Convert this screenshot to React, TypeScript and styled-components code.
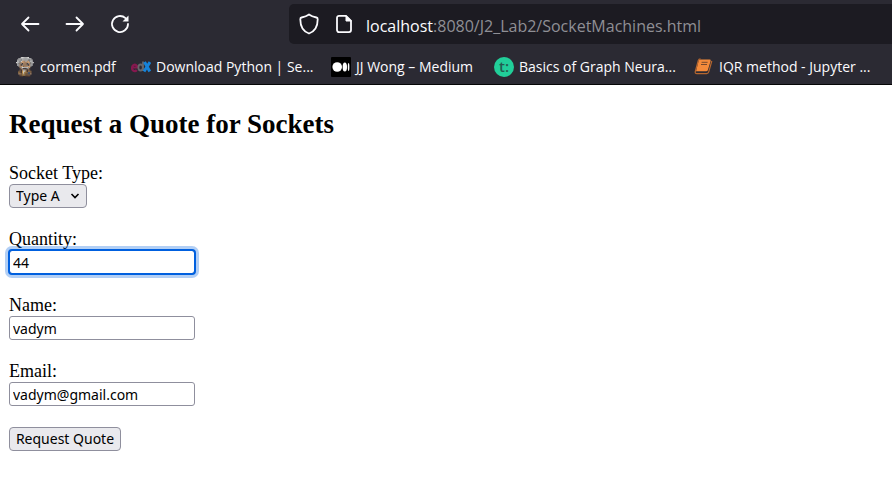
import React from "react";
import styled, { createGlobalStyle } from "styled-components";

const GlobalStyle = createGlobalStyle`
  * { box-sizing: border-box; }
  body { margin: 0; background: #fff; color: #000; }
`;

const uiFont = `"Open Sans", "Noto Sans", sans-serif`;
const controlFont = `"Noto Sans", "Open Sans", sans-serif`;

const Chrome = styled.header`
  background: #2b2a33;
  border-bottom: 1px solid #060607;
  color: #fbfbfe;
  font-family: ${uiFont};
`;

const Toolbar = styled.div`
  display: flex;
  align-items: center;
  height: 49px;
  padding-bottom: 1px;
`;

const NavButtons = styled.nav`
  display: flex;
  flex: none;
  gap: 13px;
  width: 289px;
  padding-left: 14px;
`;

const IconButton = styled.button`
  display: flex;
  align-items: center;
  justify-content: center;
  width: 32px;
  height: 32px;
  padding: 0;
  border: 0;
  background: none;
  color: inherit;
`;

const AddressBar = styled.div`
  display: flex;
  flex: 1;
  align-items: center;
  min-width: 0;
  height: 40px;
  padding-left: 2px;
  border-radius: 5px 0 0 5px;
  background: #1c1b22;
`;

const Address = styled.div`
  flex: 1;
  min-width: 0;
  padding: 4px 0 0 5px;
  overflow: hidden;
  color: #8f8f95;
  font-size: 16px;
  line-height: 24px;
  white-space: nowrap;
`;

const Host = styled.span`
  color: #fbfbfe;
`;

const AddressIcon = styled(IconButton)`
  width: 35px;
`;

const Bookmarks = styled.nav`
  display: flex;
  height: 35px;
  padding-left: 16px;
  overflow: hidden;
`;

const Bookmark = styled.a<{ $width: number }>`
  display: flex;
  flex: none;
  align-items: center;
  gap: 5px;
  width: ${(p) => p.$width}px;
  color: inherit;
  font-size: 14px;
  line-height: 20px;
  text-decoration: none;
  white-space: nowrap;

  svg { flex: none; }
`;

const Page = styled.main`
  padding: 23px 9px;
  font-family: "Liberation Serif", "Times New Roman", serif;
  font-size: 18px;
  line-height: 21px;
`;

const Title = styled.h2`
  margin: 0 0 23px;
  font-size: 27px;
  line-height: 32px;
`;

const Form = styled.form`
  display: flex;
  flex-direction: column;
  align-items: flex-start;
  gap: 21px;
`;

const Field = styled.div`
  display: flex;
  flex-direction: column;
  align-items: flex-start;
`;

const Input = styled.input<{ $active?: boolean }>`
  width: 186px;
  height: 24px;
  padding: 0 3px;
  border: 1px solid #8f8f9d;
  border-radius: 3px;
  background: #fff;
  color: #000;
  font: 14px/20px ${controlFont};
  outline: ${(p) => (p.$active ? "2px solid #0060df" : "none")};
  outline-offset: -1px;
  box-shadow: ${(p) => (p.$active ? "0 0 0 4px rgba(0, 96, 223, 0.3)" : "none")};
  appearance: textfield;

  &::-webkit-inner-spin-button { appearance: none; }
`;

const SelectBox = styled.div`
  display: grid;
  align-items: center;

  > * { grid-area: 1 / 1; }
  > svg { justify-self: end; margin-right: 7px; pointer-events: none; }
`;

const Select = styled.select`
  width: 78px;
  height: 24px;
  padding: 0 6px;
  border: 1px solid #8f8f9d;
  border-radius: 4px;
  background: #e9e9ed;
  color: #000;
  font: 14px/20px ${controlFont};
  appearance: none;
`;

const Submit = styled.button`
  width: 112px;
  height: 24px;
  padding: 0;
  border: 1px solid #8f8f9d;
  border-radius: 4px;
  background: #e9e9ed;
  color: #000;
  font: 14px/20px ${controlFont};
  white-space: nowrap;
`;

const stroke = {
  fill: "none",
  stroke: "currentColor",
  strokeWidth: 1.8,
  strokeLinecap: "round" as const,
  strokeLinejoin: "round" as const,
};

const BackIcon = () => (
  <svg width="20" height="20" viewBox="0 0 20 20" {...stroke}>
    <path d="M18.500 10H2M8.500 3.500L2 10l6.500 6.500" />
  </svg>
);

const ForwardIcon = () => (
  <svg width="20" height="20" viewBox="0 0 20 20" {...stroke}>
    <path d="M1.500 10H18M11.500 3.500L18 10l-6.500 6.500" />
  </svg>
);

const ReloadIcon = () => (
  <svg width="20" height="20" viewBox="0 0 20 20" {...stroke}>
    <path d="M18 10a8 8 0 1 1-2.500-5.800" />
    <path d="M18.500 1.500v6h-6z" fill="currentColor" stroke="none" />
  </svg>
);

const ShieldIcon = () => (
  <svg width="20" height="22" viewBox="0 0 20 22" {...stroke}>
    <path d="M10 1.500C8 3 5 4 2.600 4.500C1.600 4.700 1.300 5.300 1.300 6.200C1.300 13.500 4.500 18.500 10 20.500C15.500 18.500 18.700 13.500 18.700 6.200C18.700 5.300 18.400 4.700 17.400 4.500C15 4 12 3 10 1.500Z" />
  </svg>
);

const FileIcon = () => (
  <svg width="18" height="20" viewBox="0 0 18 20" {...stroke}>
    <path d="M4 1.900h7l5 5v9.200a2 2 0 0 1-2 2H4a2 2 0 0 1-2-2V3.900a2 2 0 0 1 2-2z" />
    <path d="M11 2v5h5z" fill="currentColor" strokeWidth="1" />
  </svg>
);

const spriteColors: Record<string, string> = {
  w: "#d5d5d3",
  g: "#94938f",
  s: "#c99c74",
  d: "#46342e",
  b: "#8b6845",
  t: "#b98d49",
  l: "#e7d9c2",
  n: "#4c5970",
};

const sprite = [
  "....wwwwwww.....",
  "..wwwwwwwwwww...",
  ".wwwgwwwwwggww..",
  ".wwgwssswssgww..",
  "wwwgssssssssgww.",
  ".wgsgdsssdgsgw..",
  ".wwsdgsssgdsww..",
  "..gsssbsssssg...",
  "...sgwwwwwgs....",
  "....sgdddgs.....",
  "...bdswwsdbb....",
  "..bbdtlltdbbb...",
  "..tbdtlttbnnb...",
  "..ssbtltbbnns...",
  "...bbtttbbbb....",
  "...ddd..dddd....",
];

const ProfessorIcon = () => (
  <svg width="19" height="20" viewBox="0 0 16 16" preserveAspectRatio="none">
    {sprite.flatMap((row, y) =>
      row.split("").map((c, x) =>
        c === "." ? null : <rect key={`${x}-${y}`} x={x} y={y} width="1" height="1" fill={spriteColors[c]} />
      )
    )}
  </svg>
);

const EdxIcon = () => (
  <svg width="20" height="20" viewBox="0 0 20 20" fill="none">
    <path d="M1.400 10.500H6.400A2.700 3.200 0 1 0 5.800 13" stroke="#86184f" strokeWidth="2.200" />
    <ellipse cx="9.600" cy="10.500" rx="2.200" ry="3" stroke="#66676b" strokeWidth="1.800" />
    <path d="M12 4.500v9.500" stroke="#66676b" strokeWidth="1.800" />
    <path d="M13.500 5L18.800 14.500M19 5L13 14.500" stroke="#1683d9" strokeWidth="3" />
  </svg>
);

const MediumIcon = () => (
  <svg width="20" height="20" viewBox="0 0 20 20">
    <rect width="20" height="20" rx="1" fill="#000" />
    <circle cx="6.200" cy="10" r="4.800" fill="#fff" />
    <ellipse cx="13.800" cy="10" rx="2.200" ry="4.500" fill="#fff" />
    <ellipse cx="17.600" cy="10" rx="0.800" ry="4" fill="#fff" />
  </svg>
);

const TopicIcon = () => (
  <svg width="20" height="20" viewBox="0 0 20 20">
    <circle cx="10" cy="10" r="10" fill="#21ce99" />
    <text x="10" y="15" textAnchor="middle" fontFamily="Open Sans, sans-serif" fontSize="15" fontWeight="600" fill="#245c51">
      t:
    </text>
  </svg>
);

const BookIcon = () => (
  <svg width="20" height="20" viewBox="0 0 20 20">
    <path d="M6 2.500h9.700q1.300 0 .9 1.400l-2.700 9q-.4 1.400-1.800 1.400H2L4.600 3.700Q4.900 2.500 6 2.500z" fill="#f58b3b" />
    <path d="M7.600 5.300h6M7 7.500h6" stroke="#7a4a2d" strokeWidth="1" />
    <path d="M17.800 4L14.800 14.700q-.5 2-2.200 2H3Q.7 16.600 1.300 14.500L4.300 3.500Q4.800 1.800 6.500 1.800" fill="none" stroke="#b5662f" strokeWidth="1.200" />
  </svg>
);

const bookmarks = [
  { label: "cormen.pdf", width: 115, Icon: ProfessorIcon },
  { label: "Download Python | Se...", width: 200, Icon: EdxIcon },
  { label: "JJ Wong – Medium", width: 163, Icon: MediumIcon },
  { label: "Basics of Graph Neura...", width: 200, Icon: TopicIcon },
  { label: "IQR method - Jupyter ...", width: 190, Icon: BookIcon },
];

export default function App() {
  return (
    <>
      <GlobalStyle />
      <Chrome>
        <Toolbar>
          <NavButtons aria-label="Navigation">
            <IconButton aria-label="Back"><BackIcon /></IconButton>
            <IconButton aria-label="Forward"><ForwardIcon /></IconButton>
            <IconButton aria-label="Reload"><ReloadIcon /></IconButton>
          </NavButtons>
          <AddressBar>
            <AddressIcon aria-label="Tracking protection"><ShieldIcon /></AddressIcon>
            <AddressIcon aria-label="Site information"><FileIcon /></AddressIcon>
            <Address><Host>localhost</Host>:8080/J2_Lab2/SocketMachines.html</Address>
          </AddressBar>
        </Toolbar>
        <Bookmarks aria-label="Bookmarks">
          {bookmarks.map(({ label, width, Icon }) => (
            <Bookmark key={label} href="#" $width={width}>
              <Icon />
              {label}
            </Bookmark>
          ))}
        </Bookmarks>
      </Chrome>
      <Page>
        <Title>Request a Quote for Sockets</Title>
        <Form onSubmit={(e) => e.preventDefault()}>
          <Field>
            <label htmlFor="type">Socket Type:</label>
            <SelectBox>
              <Select id="type" defaultValue="A">
                <option value="A">Type A</option>
                <option value="B">Type B</option>
                <option value="C">Type C</option>
              </Select>
              <svg width="10" height="8" viewBox="0 0 10 8" fill="none" stroke="#000" strokeWidth="1.600">
                <path d="M1.500 2L5 5.500L8.500 2" />
              </svg>
            </SelectBox>
          </Field>
          <Field>
            <label htmlFor="quantity">Quantity:</label>
            <Input id="quantity" type="number" defaultValue="44" $active />
          </Field>
          <Field>
            <label htmlFor="name">Name:</label>
            <Input id="name" type="text" defaultValue="vadym" />
          </Field>
          <Field>
            <label htmlFor="email">Email:</label>
            <Input id="email" type="email" defaultValue="vadym@gmail.com" />
          </Field>
          <Submit type="submit">Request Quote</Submit>
        </Form>
      </Page>
    </>
  );
}
